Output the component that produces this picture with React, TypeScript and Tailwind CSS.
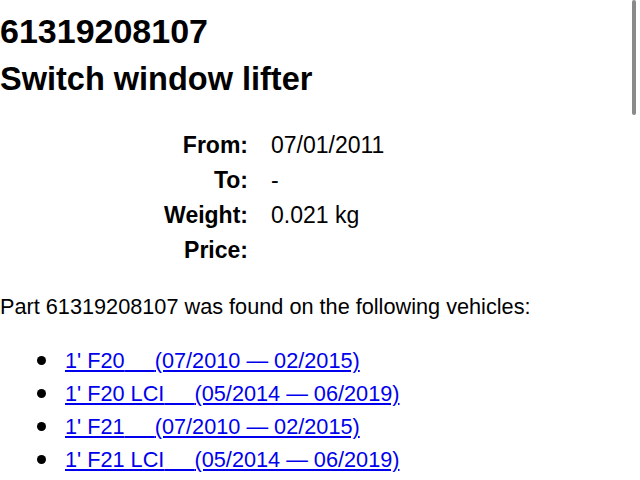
import React from 'react';

const specs = [
  { label: 'From:', value: '07/01/2011' },
  { label: 'To:', value: '-' },
  { label: 'Weight:', value: '0.021 kg' },
  { label: 'Price:', value: '' },
];

const vehicles = [
  { model: "1' F20", range: '(07/2010 — 02/2015)' },
  { model: "1' F20 LCI", range: '(05/2014 — 06/2019)' },
  { model: "1' F21", range: '(07/2010 — 02/2015)' },
  { model: "1' F21 LCI", range: '(05/2014 — 06/2019)' },
];

const GAP = '\u00a0\u00a0\u00a0\u00a0\u00a0';

export default function App() {
  return (
    <div className="relative w-[640px] h-[480px] overflow-hidden bg-white text-black font-['Liberation_Sans',Arial,sans-serif]">
      {/* scroll indicator */}
      <div className="absolute right-[4px] top-0 w-[4px] h-[115px] rounded-full bg-[#8a8a8a]" />

      <h1 className="mt-[11px] text-[34px] leading-[40px] font-bold">61319208107</h1>
      <h2 className="mt-[8px] text-[32.5px] leading-[40px] font-bold">Switch window lifter</h2>

      <div className="mt-[29px] grid grid-cols-[248px_auto] gap-x-[23px] text-[23px] leading-[35px]">
        {specs.map((s) => (
          <React.Fragment key={s.label}>
            <div className="text-right font-bold">{s.label}</div>
            <div>{s.value}</div>
          </React.Fragment>
        ))}
      </div>

      <p className="mt-[24px] text-[21.7px] leading-[30px]">
        Part 61319208107 was found on the following vehicles:
      </p>

      <ul className="mt-[22px] pl-[37px] text-[21.7px] leading-[33px]">
        {vehicles.map((v) => (
          <li key={v.model + v.range} className="flex items-center">
            <span className="w-[9px] h-[9px] rounded-full bg-black mr-[19px] shrink-0" />
            <a href="#" className="text-[#0000ee] underline">
              {v.model}
              {GAP}
              {v.range}
            </a>
          </li>
        ))}
      </ul>
    </div>
  );
}
